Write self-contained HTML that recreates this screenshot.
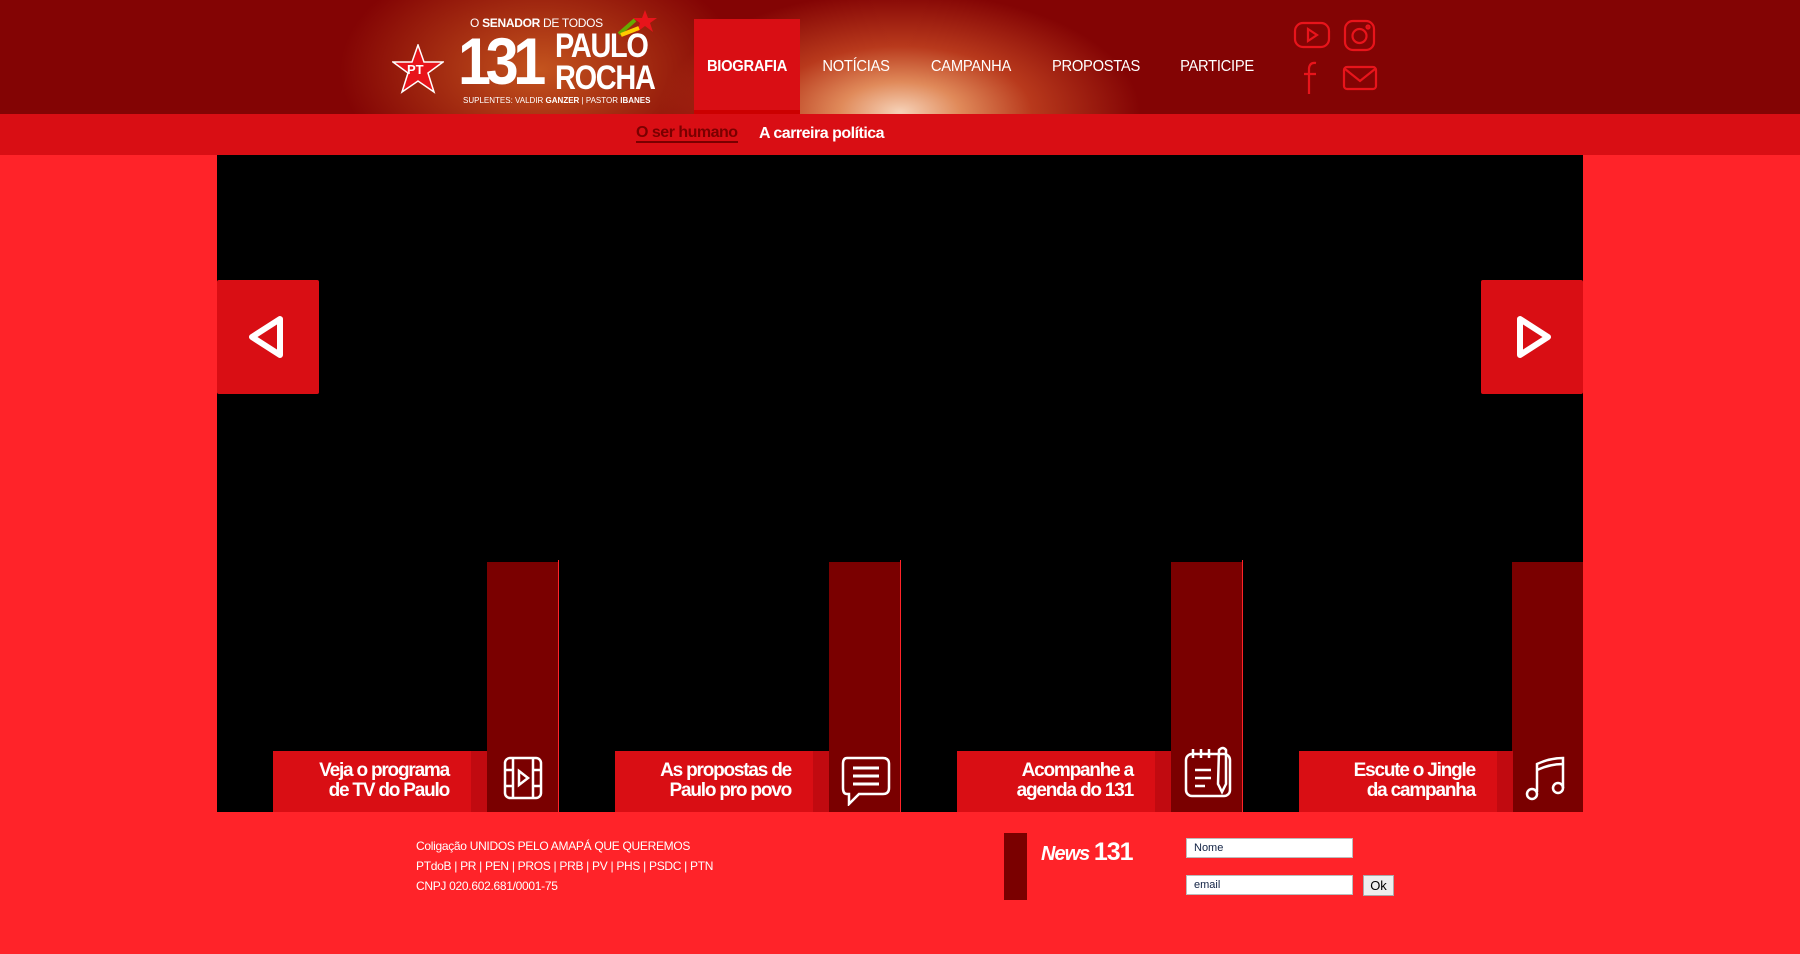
<!DOCTYPE html>
<html><head><meta charset="utf-8"><style>
*{margin:0;padding:0;box-sizing:border-box}
body{width:1800px;height:954px;background:#ff2329;font-family:"Liberation Sans",sans-serif;position:relative;overflow:hidden}
.hdr{position:absolute;left:0;top:0;width:1800px;height:114px;background:radial-gradient(ellipse 240px 120px at 900px 112px,#f6d2b8 0%,#e08a5a 25%,#b8391c 55%,rgba(140,10,5,0) 100%),radial-gradient(ellipse 200px 120px at 540px 70px,#c4541e 0%,rgba(150,20,10,0) 100%),#830404}
.sub{position:absolute;left:0;top:114px;width:1800px;height:41px;background:#d90e14}
.sub span{position:absolute;top:11px;font-size:16px;font-weight:bold;color:#fff;letter-spacing:-0.5px}
.nav{position:absolute;top:58px;font-size:16px;color:#fff;transform:translateX(-50%) scaleX(0.92);letter-spacing:-0.3px}
.bio{position:absolute;left:694px;top:19px;width:106px;height:95px;background:#d90e14;border-bottom:4px solid #c00}
.main{position:absolute;left:217px;top:155px;width:1366px;height:405px;background:#000}
.arr{position:absolute;top:280px;width:102px;height:114px;background:#d90e14;border-radius:2px}
.tile{position:absolute;top:560px;width:341px;height:252px;background:#000}
.strip{position:absolute;right:0;top:2px;width:71px;height:250px;background:#7a0000}
.lab{position:absolute;left:56px;top:191px;width:214px;height:61px;background:#d90e14;color:#fff;font-weight:bold;font-size:19px;line-height:20px;text-align:right;padding:10px 38px 0 0;letter-spacing:-1.2px}
.lab:after{content:"";position:absolute;right:0;top:0;width:16px;height:61px;background:#c10a10}
.ft{position:absolute;left:416px;color:#fff;font-size:12px;letter-spacing:-0.3px}
.in{position:absolute;left:1186px;width:167px;height:20px;background:#fff;border:1px solid #bbb;font-size:11px;color:#124;padding:3px 7px}
</style></head><body>
<div class="hdr"></div>
<svg style="position:absolute;left:392px;top:44px" width="52" height="50" viewBox="0 0 52 50"><polygon points="26,1 32,18 51,18 36,29 42,48 26,37 10,48 16,29 1,18 20,18" fill="#e8141b" stroke="#fff" stroke-width="1.5"/><text x="15" y="30" font-size="13" font-weight="bold" fill="#fff" font-family="Liberation Sans">PT</text></svg>
<div style="position:absolute;left:470px;top:16px;color:#fff;font-size:12px;letter-spacing:-0.3px">O <b>SENADOR</b> DE TODOS</div>
<svg style="position:absolute;left:615px;top:8px" width="45" height="30"><polygon points="30,2 33,10 42,10 35,15 38,24 30,18 22,24 25,15 18,10 27,10" fill="#e8141b"/><path d="M4 26 L20 12" stroke="#6a0" stroke-width="4"/><path d="M6 27 L24 20" stroke="#fc0" stroke-width="4"/></svg>
<div style="position:absolute;left:458px;top:26px;color:#fff;font-size:66px;font-weight:bold;letter-spacing:-6px;line-height:70px;transform:scaleX(0.9);transform-origin:left">131</div>
<div style="position:absolute;left:555px;top:30px;color:#fff;font-size:34px;font-weight:bold;line-height:32px;letter-spacing:-1.5px;transform:scaleX(0.85);transform-origin:left">PAULO<br>ROCHA</div>
<div style="position:absolute;left:463px;top:96px;color:#fff;font-size:8px">SUPLENTES: VALDIR <b>GANZER</b> | PASTOR <b>IBANES</b></div>
<div class="bio"></div>
<div class="nav" style="left:747px;font-weight:bold">BIOGRAFIA</div>
<div class="nav" style="left:856px">NOTÍCIAS</div>
<div class="nav" style="left:971px">CAMPANHA</div>
<div class="nav" style="left:1096px">PROPOSTAS</div>
<div class="nav" style="left:1217px">PARTICIPE</div>
<svg style="position:absolute;left:1292px;top:18px" width="90" height="76" fill="none" stroke="#e8141b" stroke-width="2.2">
<rect x="3" y="5" width="34" height="24" rx="8"/><path d="M16 11 L25 17 L16 23Z"/>
<rect x="53" y="3" width="29" height="29" rx="8"/><circle cx="67.5" cy="18" r="7"/><circle cx="76" cy="9" r="1.5"/>
<path d="M24 45 Q18 44 17 50 L17 76 M12 56 L24 56"/>
<rect x="52" y="49" width="32" height="22" rx="3"/><path d="M53 51 L68 63 L83 51"/></svg>
<div class="sub"><span style="left:636px;color:#7a0000;border-bottom:2px solid #7a0000;line-height:16px">O ser humano</span><span style="left:759px">A carreira política</span></div>
<div class="main"></div>
<div class="arr" style="left:217px"><svg width="102" height="114"><path d="M63 39 L63 75 L35 57Z" fill="none" stroke="#fff" stroke-width="6" stroke-linejoin="round"/></svg></div>
<div class="arr" style="left:1481px"><svg width="102" height="114"><path d="M39 39 L39 75 L67 57Z" fill="none" stroke="#fff" stroke-width="6" stroke-linejoin="round"/></svg></div>
<div class="tile" style="left:217px"><div class="strip"></div><div class="lab">Veja o programa<br>de TV do Paulo</div>
<svg style="position:absolute;left:286px;top:196px" width="40" height="44" fill="none" stroke="#fff" stroke-width="2.5"><rect x="2" y="2" width="36" height="40" rx="5"/><path d="M10 2V42M30 2V42M2 14H10M2 30H10M30 14H38M30 30H38M16 15L25 22L16 29Z"/></svg></div>
<div class="tile" style="left:559px"><div class="strip"></div><div class="lab">As propostas de<br>Paulo pro povo</div>
<svg style="position:absolute;left:282px;top:196px" width="50" height="50" fill="none" stroke="#fff" stroke-width="2.5"><path d="M6 2H42Q48 2 48 8V32Q48 38 42 38H18L8 48V38H6Q2 38 2 32V8Q2 2 6 2Z"/><path d="M12 12H38M12 20H38M12 28H38" stroke-width="3"/></svg></div>
<div class="tile" style="left:901px"><div class="strip"></div><div class="lab">Acompanhe a<br>agenda do 131</div>
<svg style="position:absolute;left:282px;top:186px" width="52" height="54" fill="none" stroke="#fff" stroke-width="2.5"><rect x="3" y="8" width="44" height="42" rx="6"/><path d="M10 3V12M18 3V12M26 3V12M12 24H28M12 32H28M12 40H22M36 4Q40 0 43 4V38L39 46L35 38Z"/></svg></div>
<div class="tile" style="left:1243px;width:340px"><div class="strip"></div><div class="lab">Escute o Jingle<br>da campanha</div>
<svg style="position:absolute;left:282px;top:196px" width="44" height="46" fill="none" stroke="#fff" stroke-width="2.5"><path d="M12 36V8Q25 2 38 2V32M12 14Q25 8 38 8"/><circle cx="7" cy="38" r="5"/><circle cx="33" cy="32" r="5"/></svg></div>
<div class="ft" style="top:839px">Coligação UNIDOS PELO AMAPÁ QUE QUEREMOS</div>
<div class="ft" style="top:859px">PTdoB | PR | PEN | PROS | PRB | PV | PHS | PSDC | PTN</div>
<div class="ft" style="top:879px">CNPJ 020.602.681/0001-75</div>
<div style="position:absolute;left:1004px;top:833px;width:23px;height:67px;background:#7a0000"></div>
<div style="position:absolute;left:1041px;top:838px;color:#fff;font-size:20px;font-weight:bold;letter-spacing:-1px"><i>News</i> <span style="font-size:25px">131</span></div>
<div class="in" style="top:838px">Nome</div>
<div class="in" style="top:875px">email</div>
<div style="position:absolute;left:1363px;top:875px;width:31px;height:21px;background:#eee;border:1px solid #aaa;font-size:13px;text-align:center;line-height:19px">Ok</div>
</body></html>
